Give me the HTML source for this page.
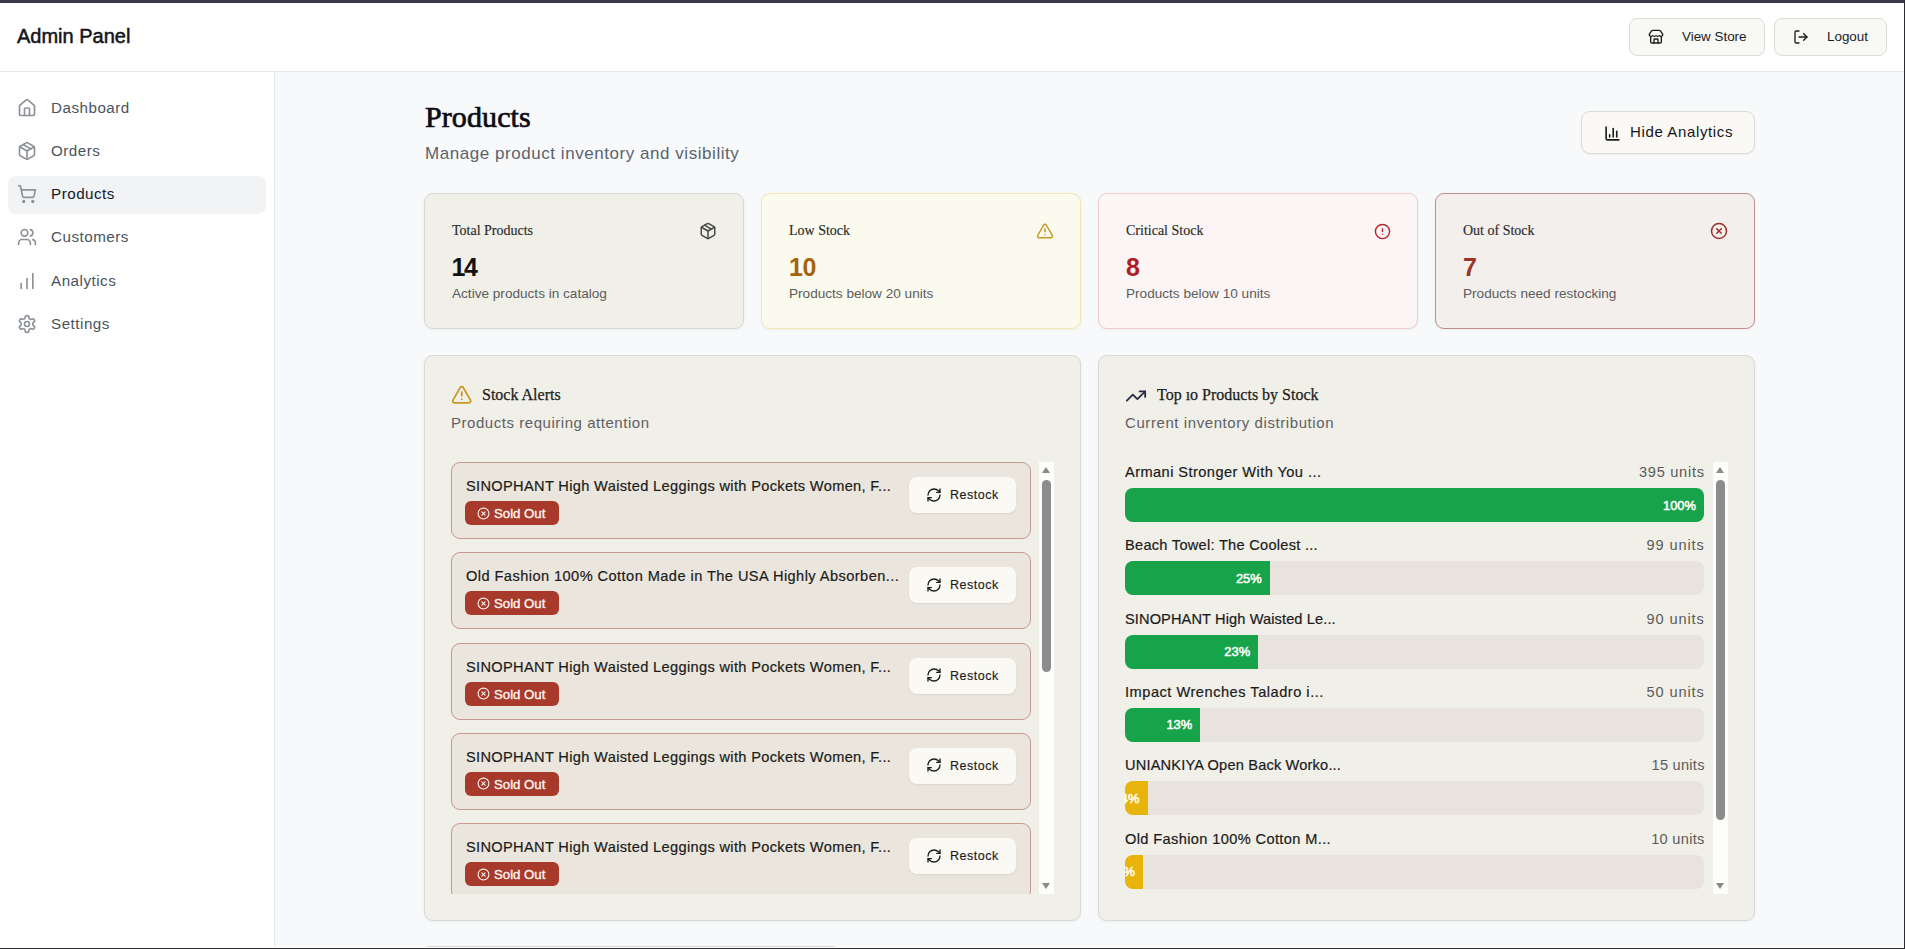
<!DOCTYPE html>
<html><head><meta charset="utf-8">
<style>
*{box-sizing:border-box;margin:0;padding:0}
html,body{width:1905px;height:949px;overflow:hidden;background:#f8f9fb;font-family:"Liberation Sans",sans-serif;color:#111827}
.abs{position:absolute}
.serif{font-family:"Liberation Serif",serif}
svg{display:block;fill:none;stroke:currentColor;stroke-linecap:round;stroke-linejoin:round}
#frameT{left:0;top:0;width:1905px;height:3px;background:#3a3947;z-index:50}
#frameR{left:1904px;top:0;width:1px;height:949px;background:#2a2a30;z-index:50}
#frameB{left:0;top:948px;width:1905px;height:1px;background:#2e2e34;z-index:50}
#frameW{left:0;top:947px;width:1904px;height:1px;background:#fff;z-index:49}
#header{left:0;top:3px;width:1904px;height:69px;background:#fff;border-bottom:1px solid #e6e7e9}
#sidebar{left:0;top:72px;width:275px;height:875px;background:#fff;border-right:1px solid #e6e7e9}
.nav{position:absolute;left:8px;width:258px;height:38px;border-radius:8px;color:#4b5360;font-size:15.2px;letter-spacing:0.5px}
.nav.active{background:#f2f3f5;color:#111827}
.nav svg{position:absolute;left:9px;top:8.3px;width:20px;height:20px;color:#8d9198;stroke-width:2}
.nav span{position:absolute;left:43px;top:9.2px;line-height:18px;white-space:nowrap}
.hbtn{position:absolute;top:18px;height:38px;border:1px solid #dcdcd7;border-radius:8px;background:#f8f8f5;color:#1c1c1c;font-size:13.4px}
.hbtn svg{position:absolute;top:10px;width:16px;height:16px;stroke-width:2;color:#1c1c1c}
.hbtn span{position:absolute;top:10px;line-height:15px;white-space:nowrap}
.card{position:absolute;top:193px;width:320px;height:136px;border:1px solid #d8d8d4;border-radius:9px;background:#f0efe8;box-shadow:0 1px 3px rgba(0,0,0,.05)}
.card .t{position:absolute;left:27px;top:29px;font-size:14px;line-height:16px;color:#2b2b2b;-webkit-text-stroke:0.15px #2b2b2b;white-space:nowrap}
.card .n{position:absolute;left:27px;top:59px;font-size:25px;letter-spacing:-0.3px;font-weight:700;line-height:28px}
.card .d{position:absolute;left:27px;top:92px;font-size:13.6px;line-height:16px;color:#5c5c5c;white-space:nowrap}
.card svg{position:absolute;right:26px;top:28px;width:18px;height:18px;stroke-width:2}
.panel{position:absolute;top:355px;width:657px;height:566px;border:1px solid #d9d9d5;border-radius:9px;background:#f0efe8;box-shadow:0 1px 3px rgba(0,0,0,.05)}
.ptitle{position:absolute;top:30px;font-size:16px;line-height:18px;color:#1d1d1d;-webkit-text-stroke:0.25px #1d1d1d;white-space:nowrap}
.psub{position:absolute;left:26px;top:58.3px;font-size:15px;line-height:18px;color:#5f6064;white-space:nowrap}
.scroll{position:absolute;left:26px;top:106px;width:603px;height:432px;overflow:hidden}
.track{position:absolute;right:0;top:0;width:15px;height:432px;background:#fdfdfc}
.thumb{position:absolute;left:3px;width:9px;border-radius:5px;background:#8c8c8c}
.arrow{position:absolute;left:3px;width:0;height:0;border-left:4.5px solid transparent;border-right:4.5px solid transparent}
.item{position:absolute;left:0;width:580px;height:77px;border:1px solid #c59990;border-radius:9px;background:#ebe6dd}
.item .nm{position:absolute;left:14px;top:14.2px;font-size:14.6px;letter-spacing:0.341px;line-height:18px;color:#1b1b1b;-webkit-text-stroke:0.2px #1b1b1b;white-space:nowrap}
.badge{position:absolute;left:13px;top:38px;width:94px;height:24px;border-radius:6px;background:#a83a2b;color:#fff7f0;font-size:13.2px;font-weight:400;-webkit-text-stroke:0.35px #fff7f0}
.badge svg{position:absolute;left:11.5px;top:5.5px;width:13px;height:13px;stroke-width:2}
.badge span{position:absolute;left:29px;top:6px;line-height:14px;white-space:nowrap}
.rbtn{position:absolute;left:457px;top:14px;width:107px;height:36px;border-radius:8px;background:#faf9f4;box-shadow:0 1px 2px rgba(0,0,0,.08);font-size:12.5px;letter-spacing:0.52px;color:#1b1b1b;-webkit-text-stroke:0.15px #1b1b1b}
.rbtn svg{position:absolute;left:17px;top:9.5px;width:16px;height:16px;stroke-width:2}
.rbtn span{position:absolute;left:41px;top:11px;line-height:15px;white-space:nowrap}
.row{position:absolute;left:0;width:579px;height:60px}
.row .nm{position:absolute;left:0;top:1px;font-size:14.6px;line-height:18px;color:#1b1b1b;-webkit-text-stroke:0.2px #1b1b1b;white-space:nowrap}
.row .u{position:absolute;right:-0.7px;top:1px;font-size:14.6px;line-height:18px;color:#5b5b5b;white-space:nowrap}
.bar{position:absolute;left:0;top:26px;width:579px;height:34px;border-radius:8px;background:#e8e4dd;overflow:hidden}
.fill{position:absolute;left:0;top:0;height:34px;background:#17a34a;display:flex;justify-content:flex-end;align-items:center;padding-right:8px;color:#fff;font-size:12.9px;font-weight:400;-webkit-text-stroke:0.5px #fff;white-space:nowrap}
.fill.y{background:#e8b30a}
</style></head><body>
<div id="frameT" class="abs"></div><div id="frameR" class="abs"></div><div id="frameB" class="abs"></div><div id="frameW" class="abs"></div>

<div id="header" class="abs">
  <div class="abs" style="left:17px;top:22px;font-size:20px;font-weight:400;-webkit-text-stroke:0.5px #14141c;line-height:22px;color:#14141c;white-space:nowrap">Admin Panel</div>
  <div class="hbtn" style="left:1629px;width:136px;top:15px">
    <svg style="left:18px" viewBox="0 0 24 24"><path d="M15 21v-5a1 1 0 0 0-1-1h-4a1 1 0 0 0-1 1v5"/><path d="M17.774 10.31a1.12 1.12 0 0 0-1.549 0 2.5 2.5 0 0 1-3.451 0 1.12 1.12 0 0 0-1.548 0 2.5 2.5 0 0 1-3.452 0 1.12 1.12 0 0 0-1.549 0 2.5 2.5 0 0 1-3.77-3.248l2.889-4.184A2 2 0 0 1 7 2h10a2 2 0 0 1 1.653.873l2.895 4.192a2.5 2.5 0 0 1-3.774 3.244"/><path d="M4 10.95V19a2 2 0 0 0 2 2h12a2 2 0 0 0 2-2v-8.05"/></svg>
    <span style="left:52px">View Store</span>
  </div>
  <div class="hbtn" style="left:1774px;width:113px;top:15px">
    <svg style="left:18px" viewBox="0 0 24 24"><path d="M9 21H5a2 2 0 0 1-2-2V5a2 2 0 0 1 2-2h4"/><polyline points="16 17 21 12 16 7"/><line x1="21" x2="9" y1="12" y2="12"/></svg>
    <span style="left:52px">Logout</span>
  </div>
</div>

<div id="sidebar" class="abs">
  <div class="nav" style="top:17.6px"><svg viewBox="0 0 24 24"><path d="M15 21v-8a1 1 0 0 0-1-1h-4a1 1 0 0 0-1 1v8"/><path d="M3 10a2 2 0 0 1 .709-1.528l7-5.999a2 2 0 0 1 2.582 0l7 5.999A2 2 0 0 1 21 10v9a2 2 0 0 1-2 2H5a2 2 0 0 1-2-2z"/></svg><span>Dashboard</span></div>
  <div class="nav" style="top:60.8px"><svg viewBox="0 0 24 24"><path d="m7.5 4.27 9 5.15"/><path d="M21 8a2 2 0 0 0-1-1.73l-7-4a2 2 0 0 0-2 0l-7 4A2 2 0 0 0 3 8v8a2 2 0 0 0 1 1.73l7 4a2 2 0 0 0 2 0l7-4A2 2 0 0 0 21 16Z"/><path d="m3.3 7 8.7 5 8.7-5"/><path d="M12 22V12"/></svg><span>Orders</span></div>
  <div class="nav active" style="top:104px"><svg viewBox="0 0 24 24"><circle cx="8" cy="21" r="1"/><circle cx="19" cy="21" r="1"/><path d="M2.05 2.05h2l2.66 12.42a2 2 0 0 0 2 1.58h9.78a2 2 0 0 0 1.95-1.57l1.65-7.43H5.12"/></svg><span>Products</span></div>
  <div class="nav" style="top:147.2px"><svg viewBox="0 0 24 24"><path d="M16 21v-2a4 4 0 0 0-4-4H6a4 4 0 0 0-4 4v2"/><circle cx="9" cy="7" r="4"/><path d="M22 21v-2a4 4 0 0 0-3-3.87"/><path d="M16 3.13a4 4 0 0 1 0 7.75"/></svg><span>Customers</span></div>
  <div class="nav" style="top:190.4px"><svg viewBox="0 0 24 24"><path d="M5 21v-6"/><path d="M12 21V9"/><path d="M19 21V3"/></svg><span>Analytics</span></div>
  <div class="nav" style="top:233.6px"><svg viewBox="0 0 24 24"><path d="M12.22 2h-.44a2 2 0 0 0-2 2v.18a2 2 0 0 1-1 1.73l-.43.25a2 2 0 0 1-2 0l-.15-.08a2 2 0 0 0-2.73.73l-.22.38a2 2 0 0 0 .73 2.73l.15.1a2 2 0 0 1 1 1.72v.51a2 2 0 0 1-1 1.74l-.15.09a2 2 0 0 0-.73 2.73l.22.38a2 2 0 0 0 2.73.73l.15-.08a2 2 0 0 1 2 0l.43.25a2 2 0 0 1 1 1.73V20a2 2 0 0 0 2 2h.44a2 2 0 0 0 2-2v-.18a2 2 0 0 1 1-1.73l.43-.25a2 2 0 0 1 2 0l.15.08a2 2 0 0 0 2.73-.73l.22-.39a2 2 0 0 0-.73-2.73l-.15-.08a2 2 0 0 1-1-1.74v-.5a2 2 0 0 1 1-1.74l.15-.09a2 2 0 0 0 .73-2.73l-.22-.38a2 2 0 0 0-2.73-.73l-.15.08a2 2 0 0 1-2 0l-.43-.25a2 2 0 0 1-1-1.73V4a2 2 0 0 0-2-2z"/><circle cx="12" cy="12" r="3"/></svg><span>Settings</span></div>
</div>

<!-- MAIN -->
<div class="abs serif" style="left:425px;top:100px;font-size:30px;letter-spacing:0.1px;line-height:34px;font-weight:400;-webkit-text-stroke:0.7px #0c0c14;color:#0c0c14;white-space:nowrap">Products</div>
<div class="abs" style="left:425px;top:143.5px;font-size:17px;letter-spacing:0.55px;line-height:20px;color:#5b626d;white-space:nowrap">Manage product inventory and visibility</div>

<div class="abs" style="left:1581px;top:111px;width:174px;height:43px;border:1px solid #dcdcd7;border-radius:9px;background:#faf9f5;box-shadow:0 1px 2px rgba(0,0,0,.05)">
  <svg class="abs" style="left:21.5px;top:12.5px;width:17px;height:17px;stroke-width:2.3;color:#1c1c1c" viewBox="0 0 24 24"><path d="M3 3v16a2 2 0 0 0 2 2h16"/><path d="M18 17V9"/><path d="M13 17V5"/><path d="M8 17v-3"/></svg>
  <span class="abs" style="left:48px;top:11px;font-size:15px;letter-spacing:0.63px;line-height:18px;color:#14141c;white-space:nowrap">Hide Analytics</span>
</div>

<!-- stat cards -->
<div class="card" style="left:424px">
  <div class="t serif">Total Products</div>
  <svg style="color:#4a4a45" viewBox="0 0 24 24"><path d="m7.5 4.27 9 5.15"/><path d="M21 8a2 2 0 0 0-1-1.73l-7-4a2 2 0 0 0-2 0l-7 4A2 2 0 0 0 3 8v8a2 2 0 0 0 1 1.73l7 4a2 2 0 0 0 2 0l7-4A2 2 0 0 0 21 16Z"/><path d="m3.3 7 8.7 5 8.7-5"/><path d="M12 22V12"/></svg>
  <div class="n" style="color:#121212;letter-spacing:-1.4px;left:26.5px">14</div>
  <div class="d">Active products in catalog</div>
</div>
<div class="card" style="left:761px;background:#fbfaee;border-color:#f5e6b0">
  <div class="t serif">Low Stock</div>
  <svg style="color:#c9981e" viewBox="0 0 24 24"><path d="m21.73 18-8-14a2 2 0 0 0-3.48 0l-8 14A2 2 0 0 0 4 21h16a2 2 0 0 0 1.73-3"/><path d="M12 9v4"/><path d="M12 17h.01"/></svg>
  <div class="n" style="color:#a4640f">10</div>
  <div class="d">Products below 20 units</div>
</div>
<div class="card" style="left:1098px;background:#fbf6f5;border-color:#f0cccc">
  <div class="t serif">Critical Stock</div>
  <svg style="color:#b8262a;width:17px;height:17px;right:26.5px;top:28.5px" viewBox="0 0 24 24"><circle cx="12" cy="12" r="10"/><line x1="12" x2="12" y1="8" y2="12"/><line x1="12" x2="12.01" y1="16" y2="16"/></svg>
  <div class="n" style="color:#b01d22">8</div>
  <div class="d">Products below 10 units</div>
</div>
<div class="card" style="left:1435px;background:#f3efed;border-color:#bf8e8c">
  <div class="t serif">Out of Stock</div>
  <svg style="color:#9e2f2a" viewBox="0 0 24 24"><circle cx="12" cy="12" r="10"/><path d="m15 9-6 6"/><path d="m9 9 6 6"/></svg>
  <div class="n" style="color:#9a3428">7</div>
  <div class="d">Products need restocking</div>
</div>

<!-- Stock alerts panel -->
<div class="panel" style="left:424px">
  <svg class="abs" style="left:25.5px;top:27.5px;width:21.5px;height:21.5px;stroke-width:2;color:#c9981e" viewBox="0 0 24 24"><path d="m21.73 18-8-14a2 2 0 0 0-3.48 0l-8 14A2 2 0 0 0 4 21h16a2 2 0 0 0 1.73-3"/><path d="M12 9v4"/><path d="M12 17h.01"/></svg>
  <div class="ptitle serif" style="left:57px">Stock Alerts</div>
  <div class="psub" style="letter-spacing:0.54px">Products requiring attention</div>
  <div class="scroll" id="alerts">
<div class="item" style="top:0.00px"><div class="nm">SINOPHANT High Waisted Leggings with Pockets Women, F...</div><div class="badge"><svg viewBox="0 0 24 24"><circle cx="12" cy="12" r="10"/><path d="m15 9-6 6"/><path d="m9 9 6 6"/></svg><span>Sold Out</span></div><div class="rbtn"><svg viewBox="0 0 24 24"><path d="M3 12a9 9 0 0 1 9-9 9.75 9.75 0 0 1 6.74 2.74L21 8"/><path d="M21 3v5h-5"/><path d="M21 12a9 9 0 0 1-9 9 9.75 9.75 0 0 1-6.74-2.74L3 16"/><path d="M8 16H3v5"/></svg><span>Restock</span></div></div>
<div class="item" style="top:90.25px"><div class="nm" style="letter-spacing:0.439px">Old Fashion 100% Cotton Made in The USA Highly Absorben...</div><div class="badge"><svg viewBox="0 0 24 24"><circle cx="12" cy="12" r="10"/><path d="m15 9-6 6"/><path d="m9 9 6 6"/></svg><span>Sold Out</span></div><div class="rbtn"><svg viewBox="0 0 24 24"><path d="M3 12a9 9 0 0 1 9-9 9.75 9.75 0 0 1 6.74 2.74L21 8"/><path d="M21 3v5h-5"/><path d="M21 12a9 9 0 0 1-9 9 9.75 9.75 0 0 1-6.74-2.74L3 16"/><path d="M8 16H3v5"/></svg><span>Restock</span></div></div>
<div class="item" style="top:180.50px"><div class="nm">SINOPHANT High Waisted Leggings with Pockets Women, F...</div><div class="badge"><svg viewBox="0 0 24 24"><circle cx="12" cy="12" r="10"/><path d="m15 9-6 6"/><path d="m9 9 6 6"/></svg><span>Sold Out</span></div><div class="rbtn"><svg viewBox="0 0 24 24"><path d="M3 12a9 9 0 0 1 9-9 9.75 9.75 0 0 1 6.74 2.74L21 8"/><path d="M21 3v5h-5"/><path d="M21 12a9 9 0 0 1-9 9 9.75 9.75 0 0 1-6.74-2.74L3 16"/><path d="M8 16H3v5"/></svg><span>Restock</span></div></div>
<div class="item" style="top:270.75px"><div class="nm">SINOPHANT High Waisted Leggings with Pockets Women, F...</div><div class="badge"><svg viewBox="0 0 24 24"><circle cx="12" cy="12" r="10"/><path d="m15 9-6 6"/><path d="m9 9 6 6"/></svg><span>Sold Out</span></div><div class="rbtn"><svg viewBox="0 0 24 24"><path d="M3 12a9 9 0 0 1 9-9 9.75 9.75 0 0 1 6.74 2.74L21 8"/><path d="M21 3v5h-5"/><path d="M21 12a9 9 0 0 1-9 9 9.75 9.75 0 0 1-6.74-2.74L3 16"/><path d="M8 16H3v5"/></svg><span>Restock</span></div></div>
<div class="item" style="top:361.00px"><div class="nm">SINOPHANT High Waisted Leggings with Pockets Women, F...</div><div class="badge"><svg viewBox="0 0 24 24"><circle cx="12" cy="12" r="10"/><path d="m15 9-6 6"/><path d="m9 9 6 6"/></svg><span>Sold Out</span></div><div class="rbtn"><svg viewBox="0 0 24 24"><path d="M3 12a9 9 0 0 1 9-9 9.75 9.75 0 0 1 6.74 2.74L21 8"/><path d="M21 3v5h-5"/><path d="M21 12a9 9 0 0 1-9 9 9.75 9.75 0 0 1-6.74-2.74L3 16"/><path d="M8 16H3v5"/></svg><span>Restock</span></div></div>
<div class="item" style="top:451.25px"><div class="nm">SINOPHANT High Waisted Leggings with Pockets Women, F...</div><div class="badge"><svg viewBox="0 0 24 24"><circle cx="12" cy="12" r="10"/><path d="m15 9-6 6"/><path d="m9 9 6 6"/></svg><span>Sold Out</span></div><div class="rbtn"><svg viewBox="0 0 24 24"><path d="M3 12a9 9 0 0 1 9-9 9.75 9.75 0 0 1 6.74 2.74L21 8"/><path d="M21 3v5h-5"/><path d="M21 12a9 9 0 0 1-9 9 9.75 9.75 0 0 1-6.74-2.74L3 16"/><path d="M8 16H3v5"/></svg><span>Restock</span></div></div>
    <div class="track"><div class="arrow" style="top:5px;border-bottom:6px solid #8a8a8a"></div><div class="thumb" style="top:18px;height:192px"></div><div class="arrow" style="top:421px;border-top:6px solid #8a8a8a"></div></div>
  </div>
</div>

<!-- Top products panel -->
<div class="panel" style="left:1098px">
  <svg class="abs" style="left:26px;top:29px;width:22px;height:22px;stroke-width:2;color:#2e2a48" viewBox="0 0 24 24"><polyline points="22 7 13.5 15.5 8.5 10.5 2 17"/><polyline points="16 7 22 7 22 13"/></svg>
  <div class="ptitle serif" style="left:58px">Top ıo Products by Stock</div>
  <div class="psub" style="letter-spacing:0.577px">Current inventory distribution</div>
  <div class="scroll" id="bars">
<div class="row" style="top:0.00px"><div class="nm" style="letter-spacing:0.437px">Armani Stronger With You ...</div><div class="u" style="letter-spacing:0.718px">395 units</div><div class="bar"><div class="fill" style="width:579.00px">100%</div></div></div>
<div class="row" style="top:73.33px"><div class="nm" style="letter-spacing:0.274px">Beach Towel: The Coolest ...</div><div class="u" style="letter-spacing:0.88px">99 units</div><div class="bar"><div class="fill" style="width:144.75px">25%</div></div></div>
<div class="row" style="top:146.66px"><div class="nm" style="letter-spacing:0.11px">SINOPHANT High Waisted Le...</div><div class="u" style="letter-spacing:0.88px">90 units</div><div class="bar"><div class="fill" style="width:133.17px">23%</div></div></div>
<div class="row" style="top:219.99px"><div class="nm" style="letter-spacing:0.516px">Impact Wrenches Taladro i...</div><div class="u" style="letter-spacing:0.88px">50 units</div><div class="bar"><div class="fill" style="width:75.27px">13%</div></div></div>
<div class="row" style="top:293.32px"><div class="nm" style="letter-spacing:0.176px">UNIANKIYA Open Back Worko...</div><div class="u" style="letter-spacing:0.25px">15 units</div><div class="bar"><div class="fill y" style="width:22.50px">4%</div></div></div>
<div class="row" style="top:366.65px"><div class="nm" style="letter-spacing:0.375px">Old Fashion 100% Cotton M...</div><div class="u" style="letter-spacing:0.3px">10 units</div><div class="bar"><div class="fill y" style="width:18.00px">3%</div></div></div>
<div class="row" style="top:439.98px"><div class="nm">Something Else Product ...</div><div class="u">8 units</div><div class="bar"><div class="fill y" style="width:11.58px">2%</div></div></div>
    <div class="track"><div class="arrow" style="top:5px;border-bottom:6px solid #8a8a8a"></div><div class="thumb" style="top:18px;height:340px"></div><div class="arrow" style="top:421px;border-top:6px solid #8a8a8a"></div></div>
  </div>
</div>

<div class="abs" style="left:424px;top:946px;width:414px;height:10px;border:1px solid #d6d6d3;border-radius:9px;background:#f0efe8"></div>
</body></html>
